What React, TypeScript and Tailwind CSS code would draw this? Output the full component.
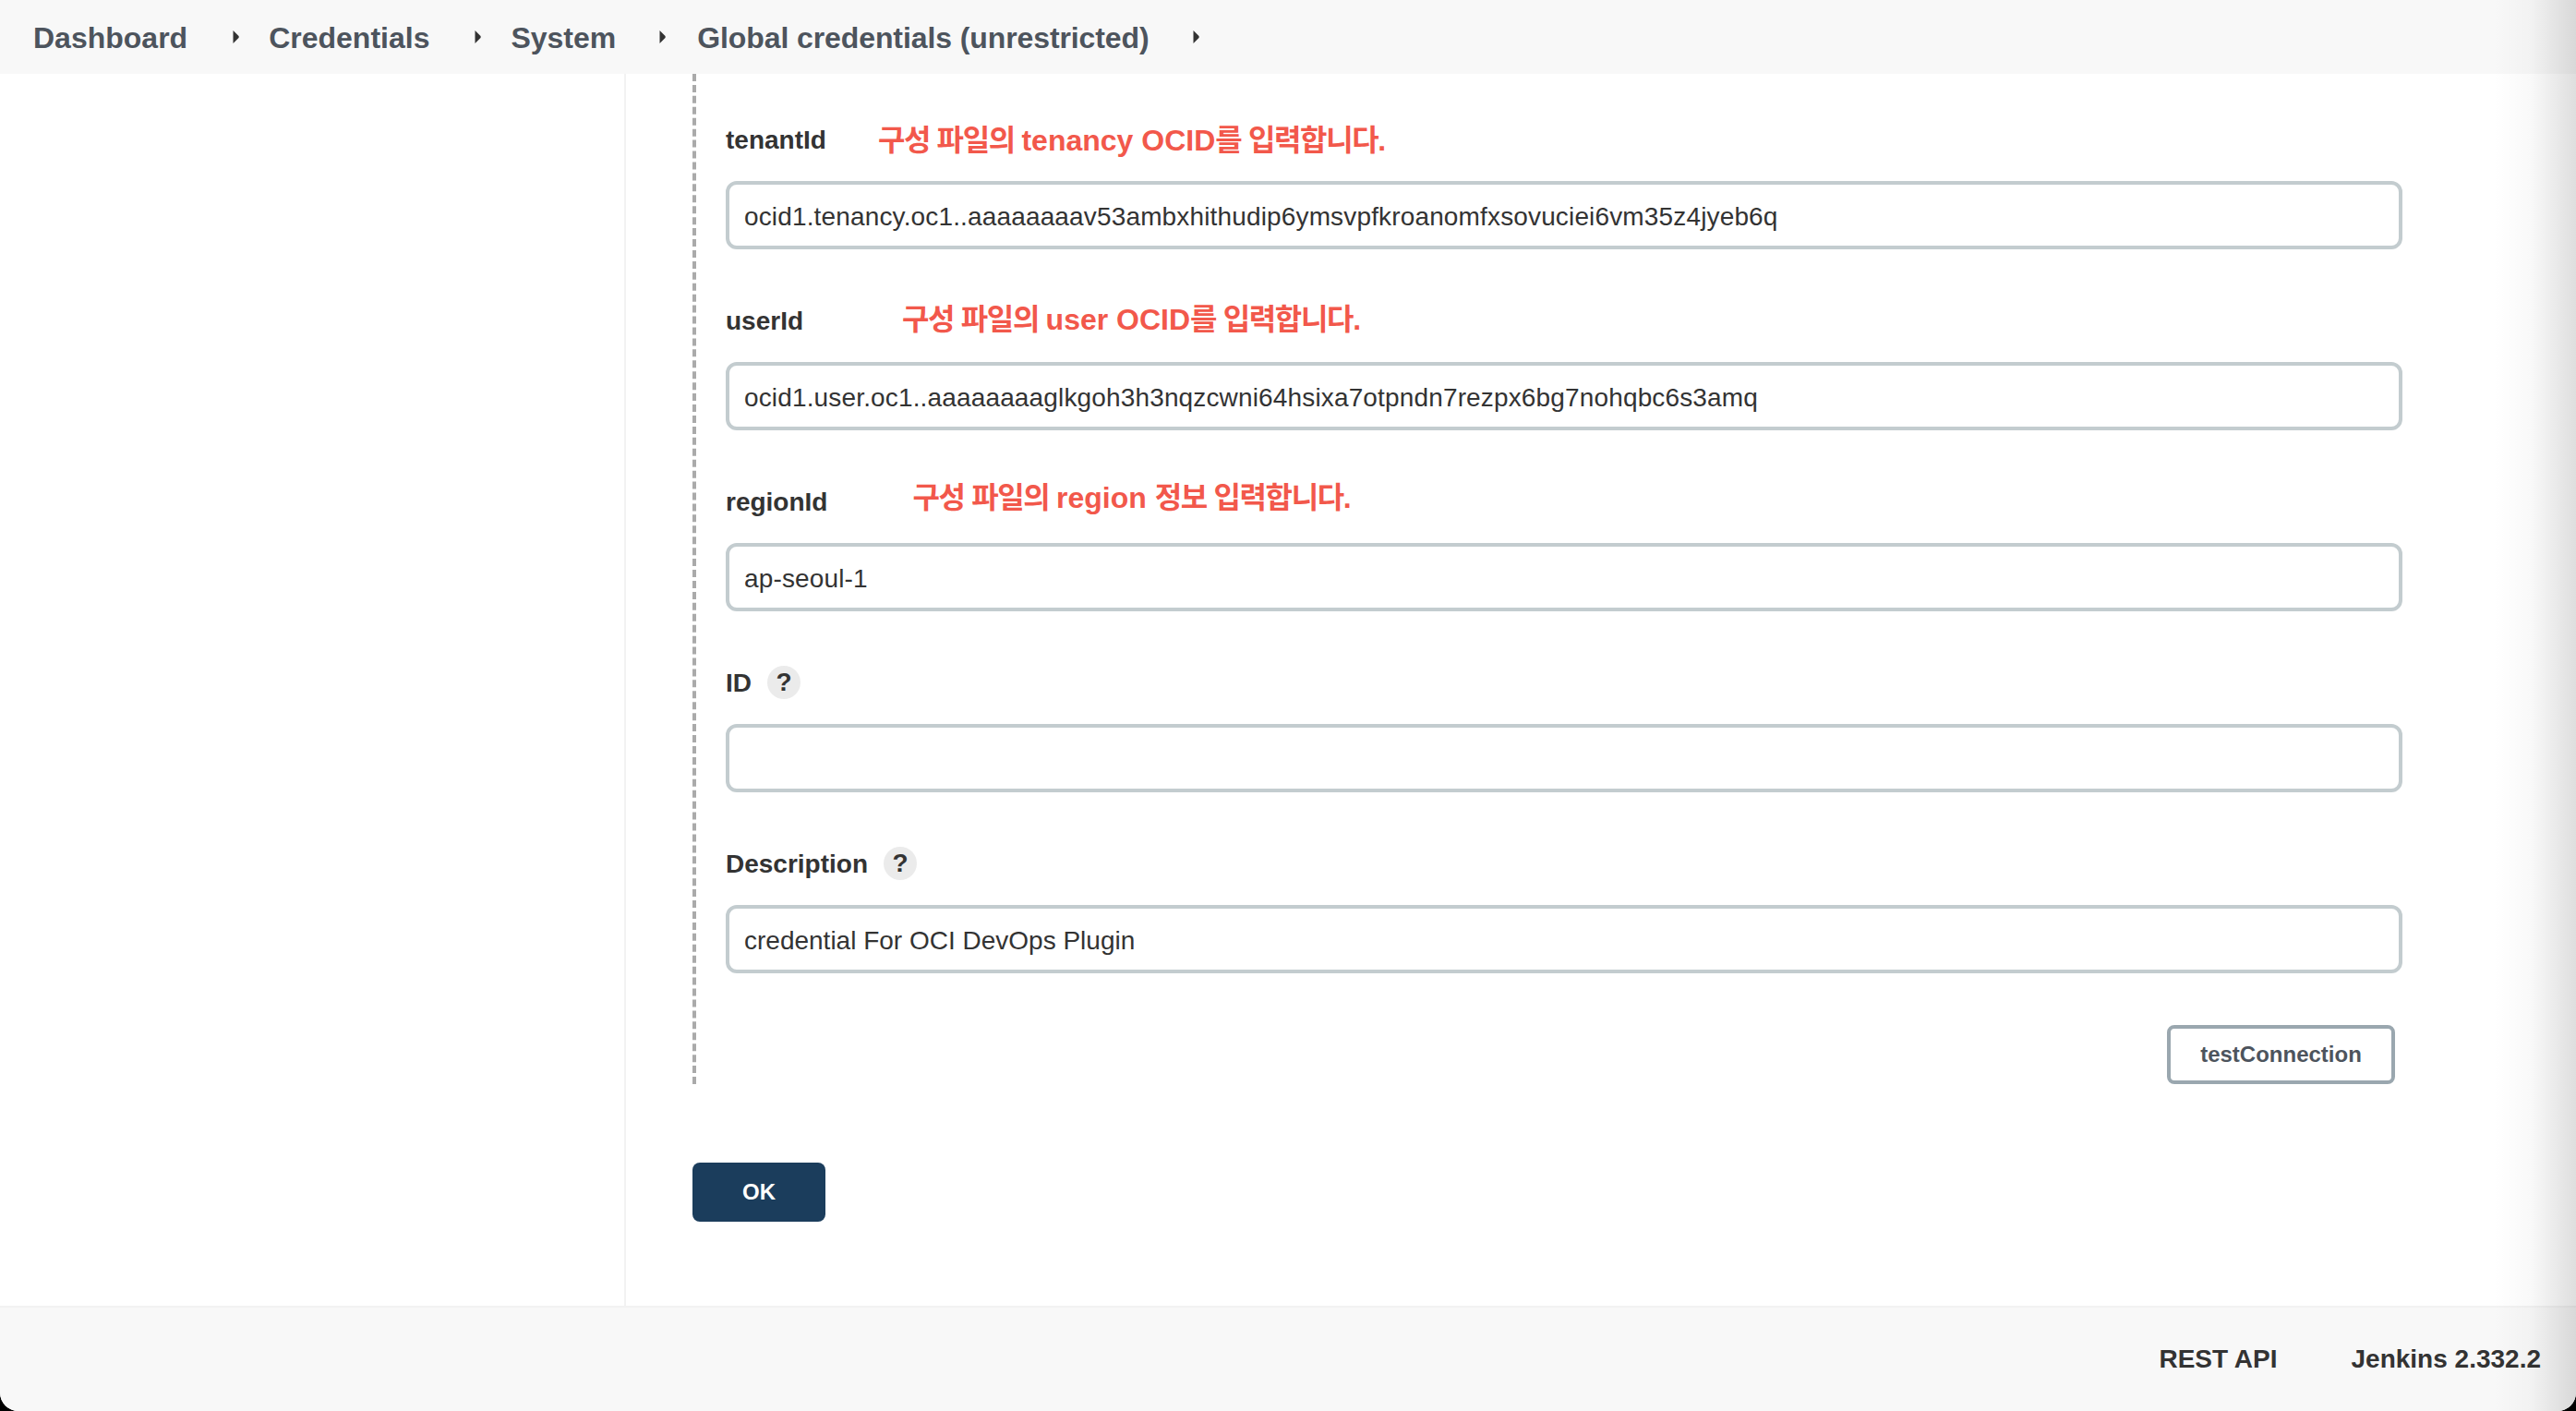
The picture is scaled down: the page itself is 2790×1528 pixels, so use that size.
const fontFamily = "font-['Liberation_Sans','Noto_Sans_CJK_KR',sans-serif]";

const crumbs = [
  { label: "Dashboard", textClass: "mr-[49px]", arrowClass: "mr-[32px]" },
  { label: "Credentials", textClass: "mr-[49px]", arrowClass: "mr-[32px]" },
  { label: "System", textClass: "mr-[47px]", arrowClass: "mr-[34px]" },
  { label: "Global credentials (unrestricted)", textClass: "mr-[47px] tracking-[-0.1px]", arrowClass: "mr-0" },
];

function CrumbArrow({ className }: { className: string }) {
  return (
    <svg viewBox="0 0 7 16" className={`h-4 w-[7px] shrink-0 ${className}`}>
      <path d="M0.5 1 L6.5 7 Q7 8 6.5 9 L0.5 15 Z" fill="#333" />
    </svg>
  );
}

function HelpBadge() {
  return (
    <span className="mt-0.5 ml-[17px] flex h-9 w-9 items-center justify-center rounded-full bg-[#ebebeb] text-[28px] font-bold text-[#333]">
      ?
    </span>
  );
}

// hangul in the reference sets narrower than Noto, latin keeps its width
function Ko({ children }: { children: string }) {
  return <span className="tracking-[-1.35px]">{children}</span>;
}

function Field({
  label,
  value = "",
  valueClass = "",
  note,
  noteClass = "",
  help = false,
}: {
  label: string;
  value?: string;
  valueClass?: string;
  note?: React.ReactNode;
  noteClass?: string;
  help?: boolean;
}) {
  return (
    <div className="mb-[58px]">
      <div className="mb-7 flex h-9 items-center text-[28px] font-bold text-[#333]">
        <span className="pt-1">{label}</span>
        {help && <HelpBadge />}
        {note && (
          <span className={`pt-1 text-[32px] font-bold whitespace-nowrap text-[#f2584b] ${noteClass}`}>
            {note}
          </span>
        )}
      </div>
      <input
        readOnly
        value={value}
        className={`block h-[74px] w-full rounded-xl border-4 border-[#c3cccf] bg-white px-4 pt-[3px] text-[28px] text-[#333] outline-none ${valueClass}`}
      />
    </div>
  );
}

export default function App() {
  return (
    <div className={`relative flex h-screen w-full flex-col overflow-hidden bg-black ${fontFamily}`}>
      <div className="relative flex h-full flex-col overflow-hidden rounded-b-[20px] bg-white">
        <header className="flex h-20 shrink-0 items-center bg-[#f8f8f8] pl-9 text-[32px] font-bold text-[#4d545d]">
          {crumbs.map((c) => (
            <div key={c.label} className="flex items-center">
              <span className={`pt-0.5 ${c.textClass}`}>{c.label}</span>
              <CrumbArrow className={c.arrowClass} />
            </div>
          ))}
        </header>

        <main className="flex min-h-0 flex-1">
          <aside className="w-[678px] shrink-0 border-r-2 border-[#f2f2f2]" />
          <div className="flex-1 pr-[188px] pl-[72px]">
            <div className="border-l-4 border-dashed border-[#aaaaaa] pt-[52px] pl-8">
              <Field
                label="tenantId"
                value="ocid1.tenancy.oc1..aaaaaaaav53ambxhithudip6ymsvpfkroanomfxsovuciei6vm35z4jyeb6q"
                valueClass="tracking-[0.15px]"
                note={<><Ko>구성 파일의 </Ko>tenancy OCID<Ko>를 입력합니다.</Ko></>}
                noteClass="ml-[56px]"
              />
              <Field
                label="userId"
                value="ocid1.user.oc1..aaaaaaaaglkgoh3h3nqzcwni64hsixa7otpndn7rezpx6bg7nohqbc6s3amq"
                valueClass="tracking-[0.15px]"
                note={<><Ko>구성 파일의 </Ko>user OCID<Ko>를 입력합니다.</Ko></>}
                noteClass="ml-[107px] mb-[5px]"
              />
              <Field
                label="regionId"
                value="ap-seoul-1"
                valueClass="tracking-[0.15px]"
                note={<><Ko>구성 파일의 </Ko>region <Ko>정보 입력합니다.</Ko></>}
                noteClass="ml-[92px] mb-[10px]"
              />
              <Field label="ID" help />
              <Field label="Description" value="credential For OCI DevOps Plugin" help />
              <div className="-mt-0.5 flex justify-end pr-2">
                <button className="h-16 w-[247px] rounded-lg border-4 border-[#9aa7af] bg-white text-2xl font-bold text-[#4d545d]">
                  testConnection
                </button>
              </div>
            </div>
            <button className="mt-[85px] h-16 w-36 rounded-lg bg-[#1b3d5c] text-2xl font-bold text-white">
              OK
            </button>
          </div>
        </main>

        <footer className="flex h-[114px] shrink-0 items-center justify-end gap-20 border-t-2 border-[#f2f2f2] bg-[#f8f8f8] pr-[38px] text-[28px] font-bold text-[#333]">
          <span>REST API</span>
          <span>Jenkins 2.332.2</span>
        </footer>

        {/* scroll shadow down the right edge */}
        <div className="pointer-events-none absolute inset-y-0 right-0 w-[90px] bg-[linear-gradient(to_right,rgba(0,0,0,0),rgba(0,0,0,0.025)_45%,rgba(0,0,0,0.13))]" />
      </div>
    </div>
  );
}
